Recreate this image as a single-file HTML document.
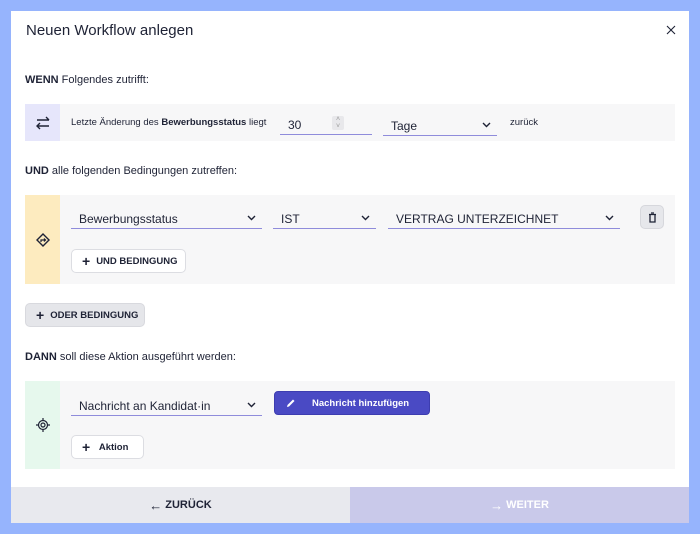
<!DOCTYPE html>
<html><head><meta charset="utf-8"><style>
*{box-sizing:border-box;margin:0;padding:0}
body{width:700px;height:534px;background:#96b4fd;font-family:"Liberation Sans",sans-serif;color:#1e2235;position:relative;overflow:hidden}
.modal{position:absolute;left:11px;top:11px;width:678px;height:512px;background:#fff}
.a{position:absolute}
.row{position:absolute;left:25px;width:650px;background:#f7f7f8}
.ic{position:absolute;left:0;top:0;bottom:0;width:35px;display:flex;align-items:center;justify-content:center}
.sel{position:absolute;height:24px;border-bottom:1px solid #8f8cdb;font-size:12px;padding:7px 0 0 8px;color:#1e2235}
.sel .chev{position:absolute;right:6px;top:10px}
.btn{position:absolute;height:24px;border:1px solid #dcdde2;border-radius:5px;background:#fff;font-size:9.5px;font-weight:bold;display:flex;align-items:center;padding-left:10px;gap:6px}
.t{font-size:11px;position:absolute}
</style></head><body>
<div class="modal"></div>
<div class="a" style="left:26px;top:22px;font-size:15px">Neuen Workflow anlegen</div>
<svg class="a" style="left:666px;top:25px" width="10" height="10" viewBox="0 0 10 10"><path d="M1 1L9 9M9 1L1 9" stroke="#1e2235" stroke-width="1.1"/></svg>

<div class="t" style="left:25px;top:74px"><b>WENN</b> Folgendes zutrifft:</div>
<div class="row" style="top:104px;height:37px">
 <div class="ic" style="background:#e6e6fb"><svg width="16" height="14" viewBox="0 0 16 14"><path d="M2 4H14M11 1L14 4M14 10H2" fill="none" stroke="#1e2235" stroke-width="1.4"/><path d="M5 7L2 10L5 13" fill="none" stroke="#1e2235" stroke-width="1.4"/></svg></div>
</div>
<div class="a" style="left:71px;top:117px;font-size:9.5px">Letzte Änderung des <b>Bewerbungsstatus</b> liegt</div>
<div class="sel" style="left:280px;top:111px;width:92px;font-size:12px">30<span class="a" style="left:52px;top:5px;width:12px;height:14px;background:#e8e8eb;border-radius:2px;font-size:7px;color:#999;text-align:center;line-height:7px">˄<br>˅</span></div>
<div class="sel" style="left:383px;top:112px;width:114px">Tage<svg class="chev" width="9" height="6" viewBox="0 0 9 6"><path d="M1 1L4.5 4.5L8 1" fill="none" stroke="#1e2235" stroke-width="1.4"/></svg></div>
<div class="a" style="left:510px;top:117px;font-size:9.5px">zurück</div>

<div class="t" style="left:25px;top:165px"><b>UND</b> alle folgenden Bedingungen zutreffen:</div>
<div class="row" style="top:195px;height:89px">
 <div class="ic" style="background:#fdebbf"><svg width="14" height="14" viewBox="0 0 14 14"><path d="M7 1L13 7L7 13L1 7Z" fill="none" stroke="#1e2235" stroke-width="1.4"/><path d="M5 9V7H9M8 5.5L9.5 7L8 8.5" fill="none" stroke="#1e2235" stroke-width="1.2"/></svg></div>
</div>
<div class="sel" style="left:71px;top:205px;width:191px">Bewerbungsstatus<svg class="chev" width="9" height="6" viewBox="0 0 9 6"><path d="M1 1L4.5 4.5L8 1" fill="none" stroke="#1e2235" stroke-width="1.4"/></svg></div>
<div class="sel" style="left:273px;top:205px;width:103px">IST<svg class="chev" width="9" height="6" viewBox="0 0 9 6"><path d="M1 1L4.5 4.5L8 1" fill="none" stroke="#1e2235" stroke-width="1.4"/></svg></div>
<div class="sel" style="left:388px;top:205px;width:232px">VERTRAG UNTERZEICHNET<svg class="chev" width="9" height="6" viewBox="0 0 9 6"><path d="M1 1L4.5 4.5L8 1" fill="none" stroke="#1e2235" stroke-width="1.4"/></svg></div>
<div class="a" style="left:640px;top:205px;width:24px;height:24px;background:#e6e7eb;border:1px solid #d6d7dc;border-radius:5px;display:flex;align-items:center;justify-content:center"><svg width="9" height="11" viewBox="0 0 9 11"><path d="M3 1H6M1 2.5H8M2 2.5V10H7V2.5" fill="none" stroke="#1e2235" stroke-width="1.3"/></svg></div>
<div class="btn" style="left:71px;top:249px;width:115px"><span style="font-size:14px;font-weight:bold">+</span>UND BEDINGUNG</div>

<div class="btn" style="left:25px;top:303px;width:120px;background:#e5e6ea;border-color:#d8d9de"><span style="font-size:14px;font-weight:bold">+</span>ODER BEDINGUNG</div>

<div class="t" style="left:25px;top:351px"><b>DANN</b> soll diese Aktion ausgeführt werden:</div>
<div class="row" style="top:381px;height:88px">
 <div class="ic" style="background:#e6f8ed"><svg width="14" height="14" viewBox="0 0 14 14"><circle cx="7" cy="7" r="4.5" fill="none" stroke="#1e2235" stroke-width="1.2"/><circle cx="7" cy="7" r="2" fill="none" stroke="#1e2235" stroke-width="1.2"/><path d="M7 0V2.5M7 11.5V14M0 7H2.5M11.5 7H14" stroke="#1e2235" stroke-width="1.2"/></svg></div>
</div>
<div class="sel" style="left:71px;top:392px;width:191px">Nachricht an Kandidat·in<svg class="chev" width="9" height="6" viewBox="0 0 9 6"><path d="M1 1L4.5 4.5L8 1" fill="none" stroke="#1e2235" stroke-width="1.4"/></svg></div>
<div class="a" style="left:274px;top:391px;width:156px;height:24px;background:#4a4ac4;border:1px solid #3d3db0;border-radius:4px;color:#fff;font-size:9.5px;font-weight:bold;display:flex;align-items:center">
 <svg style="margin-left:11px" width="10" height="10" viewBox="0 0 10 10"><path d="M1 9L1.5 7L7 1.5L8.5 3L3 8.5Z" fill="#fff"/></svg>
 <span style="margin-left:16px">Nachricht hinzufügen</span></div>
<div class="btn" style="left:71px;top:435px;width:73px"><span style="font-size:14px;font-weight:bold">+</span>&nbsp;Aktion</div>

<div class="a" style="left:11px;top:487px;width:339px;height:36px;background:#e8e9ee;display:flex;align-items:center;justify-content:center;font-size:11px;font-weight:bold"><span style="font-size:13px;font-weight:normal;margin-right:3px">←</span>ZURÜCK</div>
<div class="a" style="left:350px;top:487px;width:339px;height:36px;background:#c9c9ea;display:flex;align-items:center;justify-content:center;font-size:11px;font-weight:bold;color:#fff"><span style="font-size:13px;font-weight:normal;margin-right:3px">→</span>WEITER</div>
</body></html>
